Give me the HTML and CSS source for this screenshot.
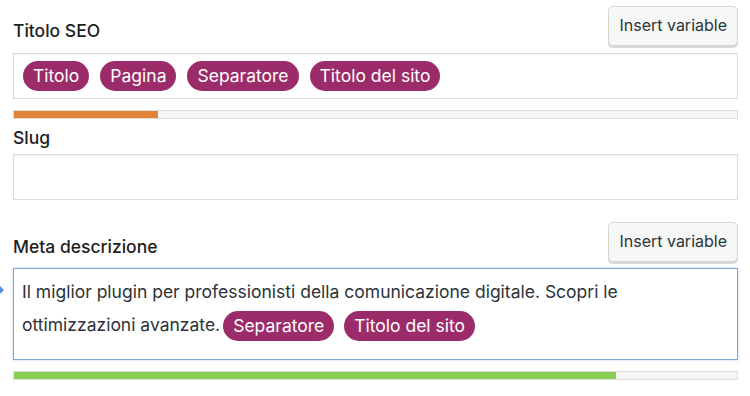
FILE: index.html
```html
<!DOCTYPE html>
<html>
	<head>
		<meta charset="UTF-8">
		<title>Snippet editor</title>
		<link rel="stylesheet" href="styles.css">
	</head>
	<body>
		<div class="editor">

			<div class="field">
				<div class="field-head">
					<label class="field-label">Titolo SEO</label>
					<button class="insert-btn">Insert variable</button>
				</div>
				<div class="input title-input">
					<span class="pill">Titolo</span>
					<span class="pill">Pagina</span>
					<span class="pill">Separatore</span>
					<span class="pill">Titolo del sito</span>
				</div>
				<div class="progress">
					<div class="progress-fill orange" style="width: 19.9%"></div>
				</div>
			</div>

			<div class="field slug">
				<label class="field-label">Slug</label>
				<div class="input slug-input"></div>
			</div>

			<div class="field meta">
				<div class="field-head">
					<label class="field-label">Meta descrizione</label>
					<button class="insert-btn">Insert variable</button>
				</div>
				<div class="input meta-input focused">
					Il miglior plugin per professionisti della comunicazione digitale. Scopri le ottimizzazioni avanzate.<span class="pill">Separatore</span> <span class="pill">Titolo del sito</span>
				</div>
				<div class="progress">
					<div class="progress-fill green" style="width: 83.3%"></div>
				</div>
			</div>

		</div>
	</body>
</html>
```

FILE: styles.css
```css
body{
	margin:0;
	background:#fff;
	font-family:Inter, "Liberation Sans", Arial, sans-serif;
	color:#1e1e1e;
}
.editor{
	padding:6px 12px 0 13px;
}
.field-head{
	display:flex;
	justify-content:space-between;
	align-items:flex-end;
	height:40px;
}
.field-label{
	display:block;
	font-size:17.5px;
	font-weight:500;
	line-height:20px;
	padding-bottom:5px;
}
.insert-btn{
	height:40px;
	padding:0 10px 2px;
	font-family:inherit;
	font-size:16px;
	color:#2c3338;
	background:#f6f7f7;
	border:1px solid #d6d6d6;
	border-radius:5px;
	box-shadow:0 2px 0 #d8d8d8;
}
.input{
	margin-top:7px;
	border:1px solid #dcdcdc;
	box-shadow:inset 0 1px 2px rgba(0,0,0,0.05);
	box-sizing:border-box;
}
.title-input{
	height:46px;
	padding:7px 7px;
	font-size:0;
}
.pill{
	display:inline-block;
	height:30px;
	line-height:30px;
	padding:0 10px;
	margin:0 2px;
	border-radius:15px;
	background:#9b2c69;
	color:#fff;
	font-size:17.5px;
	vertical-align:middle;
}
.title-input .pill{
	margin:0 9px 0 2px;
}
.progress{
	margin-top:11px;
	height:9px;
	border:1px solid #dedede;
	background:#f6f6f6;
	box-sizing:border-box;
}
.progress-fill{
	height:100%;
}
.orange{
	background:#e0843a;
}
.green{
	background:#8bcf51;
}
.slug{
	margin-top:9px;
}
.slug .field-label{
	padding-bottom:0;
}
.slug-input{
	height:46px;
	margin-top:6px;
}
.meta{
	margin-top:22px;
}
.meta-input{
	position:relative;
	margin-top:6px;
	height:92px;
	padding:6px 8px 0;
	font-size:17.5px;
	line-height:33px;
	color:#2c3338;
}
.meta-input .pill{
	margin:0 2px 0 3px;
}
.focused{
	border-color:#7fa7d9;
	box-shadow:0 0 2px rgba(91,157,217,0.5);
}
.focused:before{
	content:"";
	position:absolute;
	left:-14px;
	top:17px;
	border-style:solid;
	border-width:4px 0 4px 4px;
	border-color:transparent transparent transparent #4f94d4;
}
```
